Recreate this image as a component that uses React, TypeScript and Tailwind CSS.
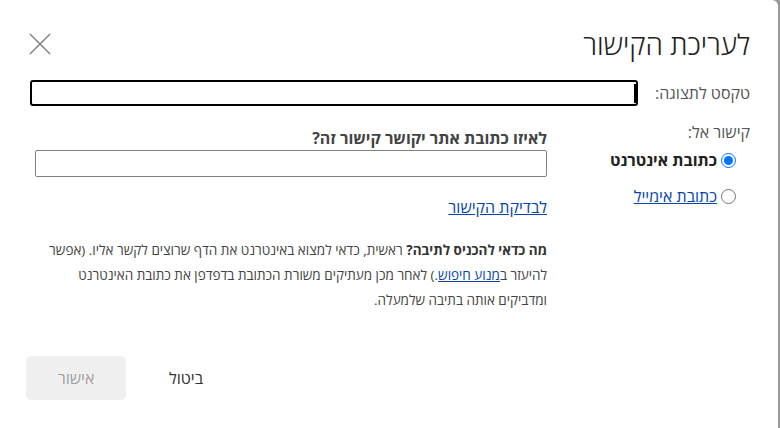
import { useState } from 'react'

export default function App() {
  const [linkType, setLinkType] = useState<'web' | 'email'>('web')
  const [displayText, setDisplayText] = useState('')
  const [url, setUrl] = useState('')

  return (
    <div className="w-[780px] h-[428px] bg-[#9a9a9a] overflow-hidden">
      <div
        dir="rtl"
        className="w-[778px] h-[428px] bg-white rounded-tr-[6px] flex flex-col text-[#333] font-['Open_Sans','Liberation_Sans',sans-serif]"
      >
        {/* header */}
        <div className="flex items-center justify-between pr-[28px] pl-[28px] pt-[22px] h-[66px]">
          <h1 className="text-[28px] font-light leading-none text-[#222]">לעריכת הקישור</h1>
          <button aria-label="סגירה" className="w-[24px] h-[24px] flex items-center justify-center">
            <svg width="22" height="22" viewBox="0 0 22 22" fill="none" stroke="#7a7a7a" strokeWidth="1.4">
              <path d="M1 1 L21 21 M21 1 L1 21" />
            </svg>
          </button>
        </div>

        {/* display text row */}
        <div className="flex items-center gap-[13px] pr-[28px] pl-[30px] mt-[14px]">
          <label className="text-[16px] text-[#555] whitespace-nowrap w-[99px]">טקסט לתצוגה:</label>
          <div className="relative flex-1">
            <input
              value={displayText}
              onChange={e => setDisplayText(e.target.value)}
              className="w-full h-[26px] border-2 border-black rounded-[3px] outline-none px-[4px] text-[14px]"
            />
            <span className="absolute right-[2px] top-[4px] w-[2px] h-[19px] bg-black" />
          </div>
        </div>

        {/* body */}
        <div className="flex pr-[28px] pl-[35px] mt-[16px]">
          <div className="w-[160px] shrink-0">
            <div className="text-[16px] text-[#555] leading-[20px]">קישור אל:</div>
            <label className="flex items-center gap-[4px] mt-[6px] mr-[14px] cursor-pointer">
              <input
                type="radio"
                name="linktype"
                checked={linkType === 'web'}
                onChange={() => setLinkType('web')}
                className="m-0 w-[15px] h-[15px] accent-[#0075ff]"
              />
              <span className="text-[16px] font-bold text-[#222]">כתובת אינטרנט</span>
            </label>
            <label className="flex items-center gap-[4px] mt-[12px] mr-[14px] cursor-pointer">
              <input
                type="radio"
                name="linktype"
                checked={linkType === 'email'}
                onChange={() => setLinkType('email')}
                className="m-0 w-[15px] h-[15px] accent-[#0075ff]"
              />
              <span className="text-[16px] text-[#0645ad] underline">כתובת אימייל</span>
            </label>
          </div>

          <div className="w-[512px] mr-[43px]">
            <div className="text-[16px] font-bold text-[#444] leading-[20px] mt-[6px]">
              לאיזו כתובת אתר יקושר קישור זה?
            </div>
            <input
              value={url}
              onChange={e => setUrl(e.target.value)}
              className="block w-full h-[27px] mt-[2px] border border-[#808080] rounded-[2px] outline-none px-[4px] text-[14px]"
            />
            <a href="#" className="inline-block mt-[20px] text-[16px] text-[#0645ad] underline leading-[20px]">
              לבדיקת הקישור
            </a>
            <p className="mt-[19px] text-[13.5px] leading-[25px] text-[#444]">
              <b className="text-[#333]">מה כדאי להכניס לתיבה?</b> ראשית, כדאי למצוא באינטרנט את הדף שרוצים לקשר אליו. (אפשר
              להיעזר ב<a href="#" className="text-[#0645ad] underline">מנוע חיפוש</a>.) לאחר מכן מעתיקים משורת הכתובת בדפדפן את כתובת האינטרנט
              ומדביקים אותה בתיבה שלמעלה.
            </p>
          </div>
        </div>

        {/* footer */}
        <div className="flex justify-end gap-[10px] pl-[26px] mt-auto mb-[28px]">
          <button className="w-[100px] h-[44px] text-[16px] text-[#333]">ביטול</button>
          <button disabled className="w-[100px] h-[44px] rounded-[5px] bg-[#f0f0f1] text-[16px] text-[#a0a0a0]">
            אישור
          </button>
        </div>
      </div>
    </div>
  )
}
